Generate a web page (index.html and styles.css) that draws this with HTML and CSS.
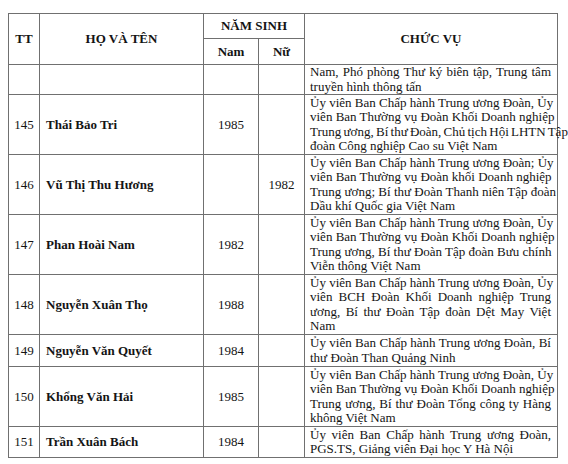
FILE: index.html
```html
<!DOCTYPE html>
<html lang="vi">
<head>
<meta charset="utf-8">
<link rel="stylesheet" href="styles.css">
</head>
<body>
<div class="page">
<table class="list">
  <colgroup>
    <col class="c-tt"><col class="c-name"><col class="c-nam"><col class="c-nu"><col class="c-cv">
  </colgroup>
  <thead>
    <tr class="h1">
      <th rowspan="2">TT</th>
      <th rowspan="2">HỌ VÀ TÊN</th>
      <th colspan="2">NĂM SINH</th>
      <th rowspan="2" class="h-cv">CHỨC VỤ</th>
    </tr>
    <tr class="h2">
      <th>Nam</th>
      <th>Nữ</th>
    </tr>
  </thead>
  <tbody>
    <tr class="r2">
      <td></td><td></td><td></td><td></td>
      <td class="cv"><span class="ln j">Nam, Phó phòng Thư ký biên tập, Trung tâm</span><span class="ln">truyền hình thông tấn</span></td>
    </tr>
    <tr class="r4">
      <td class="tt">145</td><td class="name">Thái Bảo Tri</td><td class="yr">1985</td><td class="yr"></td>
      <td class="cv"><span class="ln j">Ủy viên Ban Chấp hành Trung ương Đoàn, Ủy</span><span class="ln j">viên Ban Thường vụ Đoàn Khối Doanh nghiệp</span><span class="ln j tight">Trung ương, Bí thư Đoàn, Chủ tịch Hội LHTN Tập</span><span class="ln">đoàn Công nghiệp Cao su Việt Nam</span></td>
    </tr>
    <tr class="r4">
      <td class="tt">146</td><td class="name">Vũ Thị Thu Hương</td><td class="yr"></td><td class="yr">1982</td>
      <td class="cv"><span class="ln j">Ủy viên Ban Chấp hành Trung ương Đoàn; Ủy</span><span class="ln j">viên Ban Thường vụ Đoàn khối Doanh nghiệp</span><span class="ln j">Trung ương; Bí thư Đoàn Thanh niên Tập đoàn</span><span class="ln">Dầu khí Quốc gia Việt Nam</span></td>
    </tr>
    <tr class="r4">
      <td class="tt">147</td><td class="name">Phan Hoài Nam</td><td class="yr">1982</td><td class="yr"></td>
      <td class="cv"><span class="ln j">Ủy viên Ban Chấp hành Trung ương Đoàn, Ủy</span><span class="ln j">viên Ban Thường vụ Đoàn Khối Doanh nghiệp</span><span class="ln j">Trung ương, Bí thư Đoàn Tập đoàn Bưu chính</span><span class="ln">Viễn thông Việt Nam</span></td>
    </tr>
    <tr class="r4">
      <td class="tt">148</td><td class="name">Nguyễn Xuân Thọ</td><td class="yr">1988</td><td class="yr"></td>
      <td class="cv"><span class="ln j">Ủy viên Ban Chấp hành Trung ương Đoàn, Ủy</span><span class="ln j">viên BCH Đoàn Khối Doanh nghiệp Trung</span><span class="ln j">ương, Bí thư Đoàn Tập đoàn Dệt May Việt</span><span class="ln">Nam</span></td>
    </tr>
    <tr class="r2b">
      <td class="tt">149</td><td class="name">Nguyễn Văn Quyết</td><td class="yr">1984</td><td class="yr"></td>
      <td class="cv"><span class="ln j">Ủy viên Ban Chấp hành Trung ương Đoàn, Bí</span><span class="ln">thư Đoàn Than Quảng Ninh</span></td>
    </tr>
    <tr class="r4">
      <td class="tt">150</td><td class="name">Khổng Văn Hải</td><td class="yr">1985</td><td class="yr"></td>
      <td class="cv"><span class="ln j">Ủy viên Ban Chấp hành Trung ương Đoàn, Ủy</span><span class="ln j">viên Ban Thường vụ Đoàn Khối Doanh nghiệp</span><span class="ln j">Trung ương, Bí thư Đoàn Tổng công ty Hàng</span><span class="ln">không Việt Nam</span></td>
    </tr>
    <tr class="r2c">
      <td class="tt">151</td><td class="name">Trần Xuân Bách</td><td class="yr">1984</td><td class="yr"></td>
      <td class="cv"><span class="ln j">Ủy viên Ban Chấp hành Trung ương Đoàn,</span><span class="ln">PGS.TS, Giảng viên Đại học Y Hà Nội</span></td>
    </tr>
  </tbody>
</table>
</div>
</body>
</html>
```

FILE: styles.css
```css
html, body {
  margin: 0;
  padding: 0;
  background: #ffffff;
}
.page {
  padding: 13px 0 0 8px;
}
.list {
  border-collapse: collapse;
  table-layout: fixed;
  width: 549px;
  font-family: "Liberation Serif", "Times New Roman", serif;
  font-size: 13px;
  color: #141414;
}
.c-tt { width: 31px; }
.c-name { width: 164px; }
.c-nam { width: 55px; }
.c-nu { width: 46px; }
.c-cv { width: 253px; }
.list th, .list td {
  border: 1px solid #707070;
  padding: 0;
  vertical-align: middle;
}
.list th {
  font-weight: bold;
  text-align: center;
}
.h1 th { height: 24px; }
.h2 th { height: 25px; }
.h-cv { padding-top: 4px; }
.r2 td { height: 29px; }
.r2b td { height: 31px; }
.r2c td { height: 30px; }
.r4 td { height: 59px; }
.tt {
  text-align: center;
}
.name {
  font-weight: bold;
  padding-left: 6px !important;
}
.yr {
  text-align: center;
}
.cv {
  padding: 0 6px 0 5px !important;
  line-height: 14.6px;
}
.ln {
  display: block;
  white-space: nowrap;
  text-align: left;
}
.ln.j {
  text-align: justify;
  text-align-last: justify;
}
.ln.tight {
  word-spacing: -1px;
}
```
